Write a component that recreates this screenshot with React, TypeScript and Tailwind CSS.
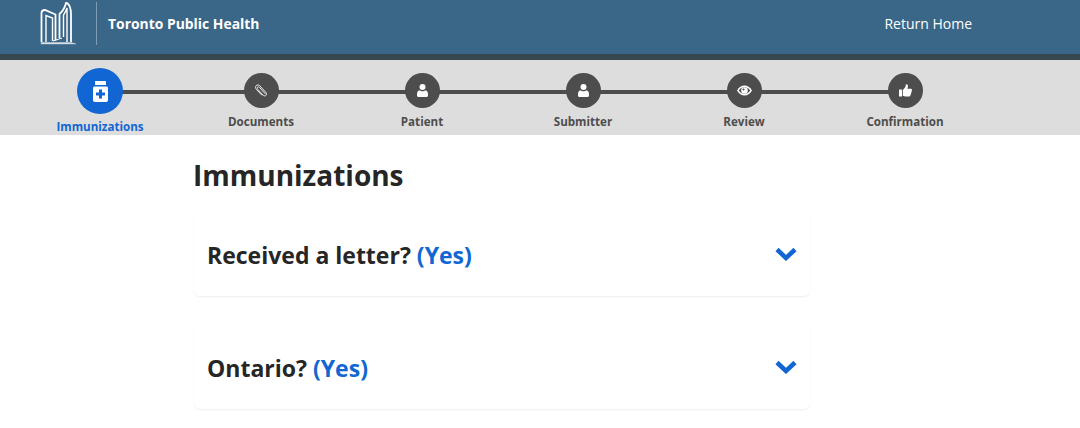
import { ReactNode } from "react";

const font = "font-['Open_Sans',sans-serif]";

function Logo() {
  return (
    <svg width="38" height="46" viewBox="0 0 38 46" fill="none" stroke="white" strokeWidth="1.800" className="block">
      <path d="M1.500 42V13C1.500 11 3 10 5 10L15.500 14.500V40.500" />
      <path d="M6 42V15.500L12.500 18V41" strokeWidth="1.400" />
      <path d="M19.500 38V14C23 11 25 7 26 3C29 3 31 8 31 14V42" />
      <path d="M23.500 37V15C25 13 26 11 27 8V42" strokeWidth="1.400" />
      <path d="M13 41L22 38" strokeWidth="1" />
      <path d="M1 42.500H31L36 44H1Z" fill="white" strokeWidth="0.400" opacity="0.8" />
    </svg>
  );
}

function Bottle() {
  return (
    <svg width="15" height="21" viewBox="0 0 15 21" className="block">
      <rect x="2" y="0" width="11" height="4" rx="0.5" fill="white" />
      <path d="M1.500 5.500H13.500C14.300 5.500 15 6.200 15 7V19C15 20 14.300 21 13 21H2C0.700 21 0 20 0 19V7C0 6.200 0.700 5.500 1.500 5.500Z" fill="white" />
      <path d="M6 8.500H9V11.500H12V14.500H9V17.500H6V14.500H3V11.500H6Z" fill="#1166d3" />
    </svg>
  );
}

function Clip() {
  return (
    <svg width="13" height="14" viewBox="0 0 13 14" fill="none" stroke="#ececec" strokeWidth="1" className="block">
      <path d="M10.500 10L4.500 3.500C3.800 2.700 3 2.700 2.500 3.200C2 3.700 2 4.500 2.700 5.300L8 11C9 12 10.200 12.200 11 11.400C11.800 10.600 11.700 9.400 10.800 8.400L4.800 1.800C3.700 0.700 2.200 0.600 1.200 1.600C0.200 2.600 0.300 4.200 1.400 5.400L7 11.400" />
    </svg>
  );
}

function Person() {
  return (
    <svg width="11" height="13" viewBox="0 0 11 13" fill="white" className="block">
      <circle cx="5.500" cy="3" r="3" />
      <path d="M2.500 6.200C3.300 7 4.300 7.300 5.500 7.300C6.700 7.300 7.700 7 8.500 6.200C10 6.500 11 8 11 10.500V11.500C11 12.300 10.300 13 9.500 13H1.500C0.700 13 0 12.300 0 11.500V10.500C0 8 1 6.500 2.500 6.200Z" />
    </svg>
  );
}

function Eye() {
  return (
    <svg width="15" height="11" viewBox="0 0 15 11" className="block">
      <path d="M0 5.500C2 2 4.500 0.500 7.500 0.500C10.500 0.500 13 2 15 5.500C13 9 10.500 10.500 7.500 10.500C4.500 10.500 2 9 0 5.500Z" fill="white" />
      <path d="M1.800 5.500C3.300 3.300 5 2.200 7.500 2.200C10 2.200 11.700 3.300 13.200 5.500C11.700 7.700 10 8.800 7.500 8.800C5 8.800 3.300 7.700 1.800 5.500Z" fill="#4d4d4d" />
      <circle cx="7.500" cy="5.500" r="3.300" fill="white" />
      <circle cx="6.500" cy="4.500" r="1" fill="#4d4d4d" />
    </svg>
  );
}

function Thumb() {
  return (
    <svg width="13" height="13" viewBox="0 0 13 13" fill="white" className="block">
      <rect x="0" y="5.500" width="3" height="7" rx="0.5" />
      <path d="M3.800 6L6 3.500C6.700 2.500 6.700 1.500 6.800 0.500C7.800 0 9 0.800 9 2.300C9 3.300 8.600 4 8.300 4.800H11.700C12.500 4.800 13 5.400 13 6C13 6.500 12.800 6.800 12.600 7C12.800 7.800 12.600 8.400 12.200 8.700C12.300 9.500 12.100 10.100 11.600 10.400C11.600 11.600 11 12.500 9.800 12.500H7.500C6 12.500 5 12 3.800 11.700Z" />
    </svg>
  );
}

type Step = { label: string; icon: ReactNode; active?: boolean };

const steps: Step[] = [
  { label: "Immunizations", icon: <Bottle />, active: true },
  { label: "Documents", icon: <Clip /> },
  { label: "Patient", icon: <Person /> },
  { label: "Submitter", icon: <Person /> },
  { label: "Review", icon: <Eye /> },
  { label: "Confirmation", icon: <Thumb /> },
];

function StepItem({ step }: { step: Step }) {
  if (step.active) {
    return (
      <div className="relative flex w-[161px] flex-col items-center pt-[8px]">
        <div className="flex h-[46px] w-[46px] items-center justify-center rounded-full bg-[#1166d3]">{step.icon}</div>
        <span className="mt-[5px] text-[11.6px] leading-[16px] font-bold text-[#1166d3]">{step.label}</span>
      </div>
    );
  }
  return (
    <div className="relative flex w-[161px] flex-col items-center pt-[13px]">
      <div className="flex h-[35px] w-[35px] items-center justify-center rounded-full bg-[#4d4d4d]">{step.icon}</div>
      <span className="mt-[6px] text-[11.6px] leading-[16px] font-bold text-[#4d4d4d]">{step.label}</span>
    </div>
  );
}

function Question({ label }: { label: string }) {
  return (
    <div className="flex h-[84px] w-[616px] items-start justify-between rounded-b-[6px] pt-[27px] pr-[13px] pl-[13px] shadow-[0_1px_2px_rgba(0,0,0,0.07)]">
      <h2 className="text-[23px] leading-[32px] font-bold text-[#262626]">
        {label} <span className="text-[#1166d3]">(Yes)</span>
      </h2>
      <svg width="22" height="14" viewBox="0 0 22 14" className="mt-[8px] block" fill="none" stroke="#1166d3" strokeWidth="4.500">
        <path d="M2 2.500L11 11L20 2.500" />
      </svg>
    </div>
  );
}

export default function App() {
  return (
    <div className={`${font} h-[428px] w-[1080px] overflow-hidden bg-white`}>
      <header className="flex h-[60px] border-b-[6px] border-[#37474f] bg-[#3a6688]">
        <div className="ml-[40px] flex h-[46px] items-start">
          <Logo />
        </div>
        <div className="mt-[2px] ml-[18px] h-[43px] w-px bg-[#7f9db4]" />
        <span className="mt-[14px] ml-[11px] text-[13.9px] leading-[20px] font-bold text-white">Toronto Public Health</span>
        <span className="mt-[14px] ml-[625px] text-[14px] leading-[20px] text-white">Return Home</span>
      </header>

      <nav className="relative flex h-[75px] bg-[#dddddd] pl-[19.5px]">
        <div className="absolute top-[30px] left-[100px] h-[4px] w-[805px] bg-[#4d4d4d]" />
        {steps.map((s) => (
          <StepItem key={s.label} step={s} />
        ))}
      </nav>

      <main className="pl-[194px]">
        <h1 className="mt-[20px] -ml-px text-[28px] leading-[40px] font-bold text-[#262626]">Immunizations</h1>
        <div className="mt-[17px] flex flex-col gap-[29px]">
          <Question label="Received a letter?" />
          <Question label="Ontario?" />
        </div>
      </main>
    </div>
  );
}
